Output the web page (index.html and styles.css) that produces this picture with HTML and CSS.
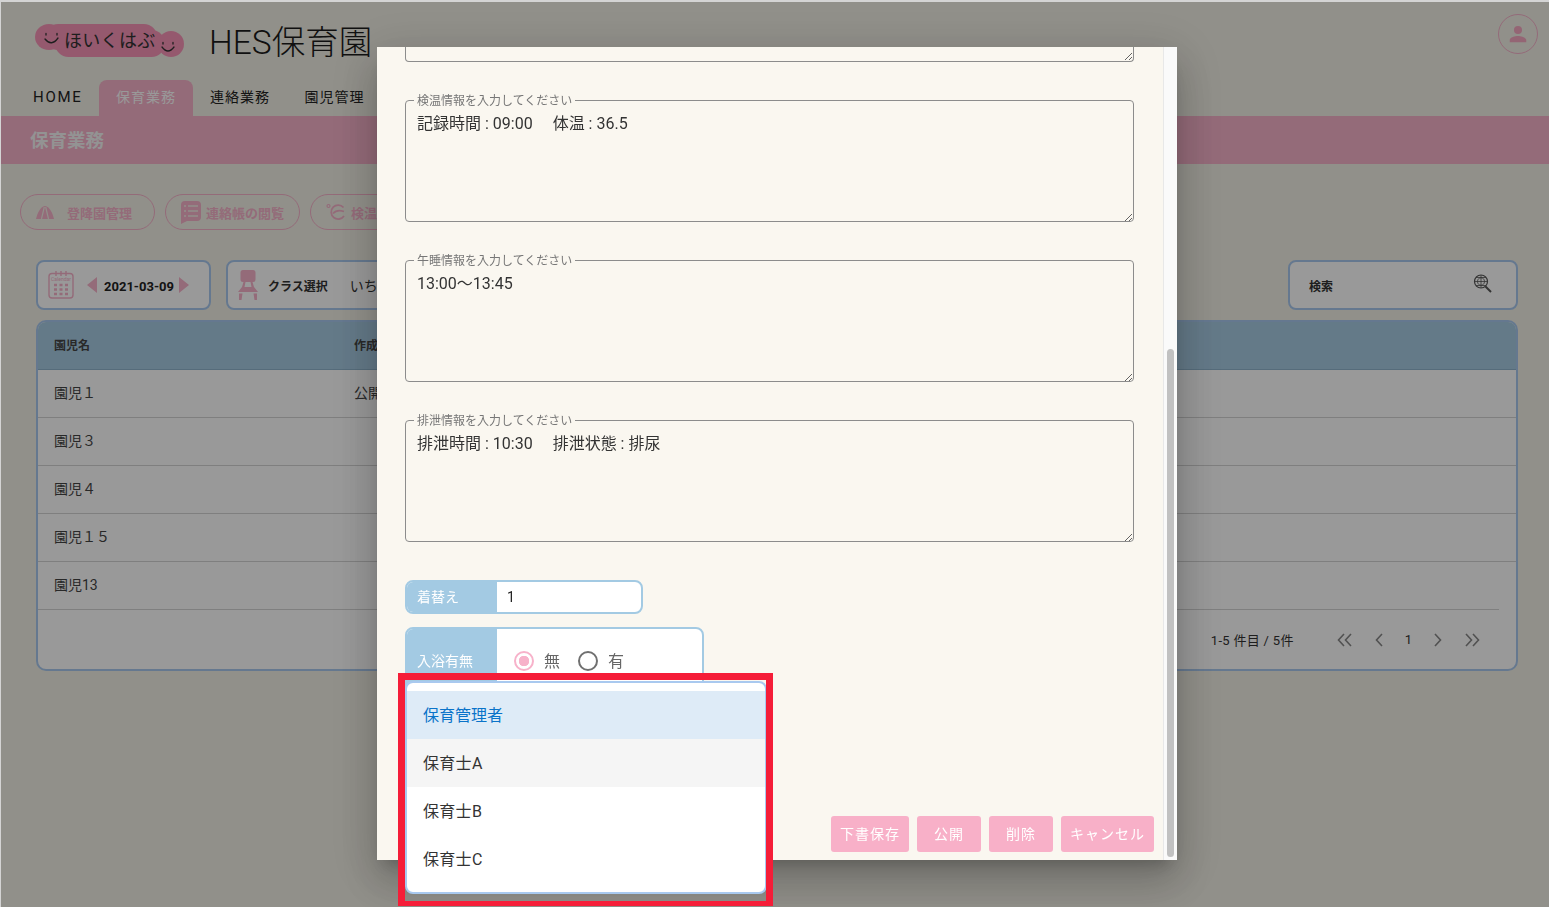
FILE: index.html
```html
<!DOCTYPE html>
<html lang="ja">
<head>
    <meta name="viewport" content="width=device-width, initial-scale=1.0">
    <title>HES保育園</title>
    <link rel="stylesheet" href="styles.css">
</head>
<body>
    <div class="page">
        <header class="topbar">
            <div class="brand">
                <svg class="logo" width="150" height="34" viewBox="0 0 150 34">
                    <ellipse class="logo-blob" cx="14" cy="13" rx="14" ry="13"/>
                    <rect class="logo-blob" x="10" y="0" width="112" height="26" rx="13"/>
                    <rect class="logo-blob" x="20" y="6" width="110" height="27" rx="13.500"/>
                    <ellipse class="logo-blob" cx="136" cy="20" rx="13" ry="13"/>
                    <path class="logo-face" d="M11 9.500v1.500M22 9.500v1.500M10 15Q16.500 23 23 14"/>
                    <path class="logo-face" d="M128 18.500v1.500M138 18.500v1.500M127 23Q133 31 139 23"/>
                    <text class="logo-text" x="29" y="23">ほいくはぶ</text>
                </svg>
                <h1 class="site-name">HES保育園</h1>
            </div>
            <div class="user-btn">
                <svg width="22" height="22" viewBox="0 0 24 24"><path d="M12 12a4.400 4.400 0 1 0 0-8.800 4.400 4.400 0 0 0 0 8.800zm0 2.200c-3 0-9 1.500-9 4.400V21h18v-2.400c0-2.900-6-4.400-9-4.400z"/></svg>
            </div>
        </header>

        <nav class="tabs">
            <a class="tab tab-home">HOME</a>
            <a class="tab active">保育業務</a>
            <a class="tab">連絡業務</a>
            <a class="tab">園児管理</a>
        </nav>
        <div class="band">保育業務</div>

        <div class="shortcuts">
            <a class="pill">
                <svg class="pill-tent" width="18" height="13" viewBox="0 0 18 13"><path d="M9 0C4 1 1.500 7 0 13H18C16.500 7 14 1 9 0Z" fill="currentColor"/><path d="M8.300 1L5.500 13M9.700 1L12.500 13" fill="none" stroke="#f2f0e6" stroke-width="1.200"/></svg>
                <span>登降園管理</span>
            </a>
            <a class="pill">
                <svg width="20" height="23" viewBox="0 0 20 23"><path d="M4 0h12a4 4 0 0 1 4 4v12a4 4 0 0 1-4 4H6l-6 3V4a4 4 0 0 1 4-4z" fill="currentColor"/><path d="M3 5h2M3 10h2M3 15h2M7 5h10M7 10h10M7 15h10" stroke="#f2f0e6" stroke-width="1.400"/></svg>
                <span>連絡帳の閲覧</span>
            </a>
            <a class="pill">
                <svg width="20" height="18" viewBox="0 0 20 18" fill="none" stroke="currentColor"><circle cx="2.500" cy="3" r="1.500" stroke-width="1.200"/><path d="M17.500 4.500A7 7 0 1 0 18 13" stroke-width="1.800"/><path d="M7 10.500C10 7 14 7 18 8.500" stroke-width="1.800"/></svg>
                <span>検温情報</span>
            </a>
        </div>

        <div class="tools">
            <div class="tool tool-date">
                <svg width="26" height="28" viewBox="0 0 26 28" fill="none" stroke="currentColor">
                    <rect x="1" y="2.500" width="24" height="24.500" rx="3" stroke-width="1.400"/>
                    <path d="M8 0v5M13 0v5M18 0v5" stroke-width="1.400"/>
                    <text class="cal-text" x="13" y="10">Calendar</text>
                    <path d="M6 14h3M11.500 14h3M17 14h3M6 18.500h3M11.500 18.500h3M17 18.500h3M6 23h3M11.500 23h3M17 23h3" stroke-width="2.600"/>
                </svg>
                <span class="arrow arrow-left"></span>
                <span class="date-text">2021-03-09</span>
                <span class="arrow arrow-right"></span>
            </div>
            <div class="tool tool-class">
                <svg width="20" height="30" viewBox="0 0 20 30"><path d="M5 0h10a2.500 2.500 0 0 1 2.500 2.500v7a2.500 2.500 0 0 1-2.500 2.500h-.5l1.500 5 4 5H0l4-5 1.500-5H5a2.500 2.500 0 0 1-2.500-2.500v-7A2.500 2.500 0 0 1 5 0z M7.500 12l-1 5h7l-1-5z M1 23.500h3.500l-1 6.500H1z M15.500 23.500H19V30h-2.500z" fill="currentColor" fill-rule="evenodd"/></svg>
                <span class="tool-label">クラス選択</span>
                <span class="tool-value">いちご組</span>
            </div>
            <div class="tool tool-search">
                <span class="tool-label">検索</span>
                <svg width="20" height="20" viewBox="0 0 20 20" fill="none" stroke="#555"><circle cx="8" cy="7.500" r="6.500" stroke-width="1.200"/><path d="M1.500 7.500h13M8 1v13M3 3.500h10M3 11.500h10M4.500 7.500c0-5 7-5 7 0s-7 5-7 0" stroke-width=".8"/><path d="M12.500 12.500L18 18" stroke-width="2"/></svg>
            </div>
        </div>

        <section class="list-card">
            <table class="kids">
                <thead>
                    <tr><th class="col-name">園児名</th><th>作成状況</th></tr>
                </thead>
                <tbody>
                    <tr><td>園児１</td><td>公開</td></tr>
                    <tr><td>園児３</td><td></td></tr>
                    <tr><td>園児４</td><td></td></tr>
                    <tr><td>園児１５</td><td></td></tr>
                    <tr><td>園児13</td><td></td></tr>
                </tbody>
            </table>
            <div class="pager">
                <span class="pager-count">1-5 件目 / 5件</span>
                <div class="pager-btns">
                    <svg width="16" height="14" viewBox="0 0 16 14"><path d="M7 1L1.500 7 7 13M14 1L8.500 7 14 13"/></svg>
                    <svg width="10" height="14" viewBox="0 0 10 14"><path d="M8 1L2.500 7 8 13"/></svg>
                    <span class="pager-num">1</span>
                    <svg width="10" height="14" viewBox="0 0 10 14"><path d="M2 1L7.500 7 2 13"/></svg>
                    <svg width="16" height="14" viewBox="0 0 16 14"><path d="M2 1L7.500 7 2 13M9 1L14.500 7 9 13"/></svg>
                </div>
            </div>
        </section>
    </div>

    <div class="overlay"></div>

    <div class="dialog">
        <div class="dialog-body">
            <div class="field field-cut">
                <textarea class="field-input" readonly></textarea>
            </div>
            <fieldset class="field">
                <legend>検温情報を入力してください</legend>
                <textarea class="field-input" readonly>記録時間 : 09:00　 体温 : 36.5</textarea>
            </fieldset>
            <fieldset class="field">
                <legend>午睡情報を入力してください</legend>
                <textarea class="field-input" readonly>13:00〜13:45</textarea>
            </fieldset>
            <fieldset class="field">
                <legend>排泄情報を入力してください</legend>
                <textarea class="field-input" readonly>排泄時間 : 10:30　 排泄状態 : 排尿</textarea>
            </fieldset>

            <div class="form-row row-change">
                <span class="form-label">着替え</span>
                <span class="form-value">1</span>
            </div>
            <div class="form-row row-bath">
                <span class="form-label">入浴有無</span>
                <div class="radios">
                    <input type="radio" name="bath" checked>
                    <span class="radio-text">無</span>
                    <input type="radio" name="bath">
                    <span class="radio-text">有</span>
                </div>
            </div>

            <div class="dialog-actions">
                <button class="btn btn-draft">下書保存</button>
                <button class="btn btn-short">公開</button>
                <button class="btn btn-short">削除</button>
                <button class="btn btn-cancel">キャンセル</button>
            </div>
        </div>
        <div class="scrollbar"><div class="scroll-thumb"></div></div>
    </div>

    <ul class="menu">
        <li class="menu-item selected">保育管理者</li>
        <li class="menu-item hover">保育士A</li>
        <li class="menu-item">保育士B</li>
        <li class="menu-item">保育士C</li>
    </ul>
    <div class="highlight"></div>
</body>
</html>
```

FILE: styles.css
```css
*{
    margin: 0;
    padding: 0;
    box-sizing: border-box;
}
html, body{
    height: 100%;
    overflow: hidden;
}
body{
    background: #d4d4d4;
    font-family: "Roboto", "Noto Sans CJK JP", sans-serif;
    color: #333;
}
.page{
    height: 905px;
    margin: 2px 0 0 1px;
    background: #f2f0e6;
}
.topbar{
    height: 78px;
    display: flex;
    justify-content: space-between;
    padding: 22px 11px 0 34px;
}
.brand{
    display: flex;
    align-items: flex-start;
}
.logo{
    display: block;
}
.logo-blob{
    fill: #f895b8;
}
.logo-face{
    fill: none;
    stroke: #333;
    stroke-width: 1.300;
    stroke-linecap: round;
}
.logo-text{
    font-size: 18px;
    letter-spacing: .3px;
    fill: #333;
}
.site-name{
    font-size: 33.500px;
    font-weight: 300;
    line-height: 38px;
    margin-left: 24px;
    color: #1c1c1c;
}
.user-btn{
    width: 40px;
    height: 40px;
    margin-top: -10px;
    border: 1px solid #f7b2ca;
    border-radius: 50%;
    display: flex;
    align-items: center;
    justify-content: center;
}
.user-btn svg{
    fill: #f7a8c2;
}
.tabs{
    height: 36px;
    display: flex;
    padding-left: 32px;
}
.tab{
    height: 36px;
    padding: 0 17.500px 0 17px;
    line-height: 35px;
    font-size: 14px;
    letter-spacing: 1px;
    color: #222;
}
.tab-home{
    width: 66px;
    padding: 0;
    font-size: 15px;
    letter-spacing: 1.700px;
}
.tab.active{
    width: 94px;
    padding: 0 17px;
    background: #f7b2ca;
    border-radius: 8px 8px 0 0;
    color: #fff;
}
.band{
    height: 48px;
    padding-left: 29px;
    background: #f7b2ca;
    color: #f5f5f5;
    font-size: 18.500px;
    font-weight: 700;
    line-height: 50px;
}
.shortcuts{
    display: flex;
    gap: 10px;
    padding: 30px 0 0 19px;
}
.pill{
    width: 135px;
    height: 36px;
    display: flex;
    align-items: center;
    padding-left: 15px;
    gap: 5px;
    border: 1px solid #f7b2ca;
    border-radius: 18px;
    color: #f7b2ca;
    font-size: 13px;
    font-weight: 700;
}
.pill-tent{
    margin-right: 8px;
}
.tools{
    display: flex;
    gap: 15px;
    padding: 30px 0 0 35px;
}
.tool{
    height: 50px;
    display: flex;
    align-items: center;
    background: #fff;
    border: 2px solid #a9c9ef;
    border-radius: 8px;
}
.tool-date{
    width: 175px;
    padding-left: 10px;
    color: #f7b2ca;
}
.cal-text{
    font-size: 5px;
    text-anchor: middle;
    fill: currentColor;
    stroke: none;
}
.arrow{
    width: 0;
    height: 0;
    border-top: 8px solid transparent;
    border-bottom: 8px solid transparent;
}
.arrow-left{
    margin-left: 13px;
    border-right: 10px solid #f7b2ca;
}
.arrow-right{
    border-left: 10px solid #f7b2ca;
}
.date-text{
    width: 82px;
    margin-top: 2px;
    padding-left: 2px;
    text-align: center;
    color: #222;
    font-size: 13px;
    font-weight: 700;
}
.tool-class{
    width: 300px;
    padding-left: 10px;
    color: #f7b2ca;
}
.tool-label{
    font-size: 12px;
    font-weight: 700;
    color: #333;
}
.tool-class .tool-label{
    margin-left: 10px;
}
.tool-value{
    margin-left: 22px;
    font-size: 14px;
    color: #333;
}
.tool-search{
    width: 230px;
    margin-left: auto;
    margin-right: 31px;
    padding: 0 23px 0 19px;
    justify-content: space-between;
}
.tool-search .tool-label{
    margin-top: 1px;
}
.tool-search svg{
    margin-top: -3px;
}
.list-card{
    width: 1482px;
    height: 351px;
    margin: 10px 0 0 35px;
    background: #fff;
    border: 2px solid #a9c9ef;
    border-radius: 10px;
    overflow: hidden;
}
.kids{
    width: 100%;
    border-collapse: collapse;
    font-size: 14px;
}
.kids th{
    height: 47px;
    padding: 0 0 2px 16px;
    background: #a7cbe3;
    border-bottom: 1px solid #8fb4cd;
    font-size: 12px;
    font-weight: 700;
    text-align: left;
    color: #444;
}
.kids .col-name{
    width: 300px;
}
.kids td{
    height: 48px;
    padding: 0 0 3px 16px;
    border-bottom: 1px solid #d4d4d4;
    color: #444;
}
.kids tr:last-child td{
    border-bottom: 0;
}
.pager{
    height: 60px;
    margin-right: 17px;
    padding-right: 19px;
    display: flex;
    justify-content: flex-end;
    align-items: center;
    gap: 43px;
    border-top: 1px solid #d4d4d4;
    font-size: 13px;
    color: #333;
}
.pager-count{
    letter-spacing: .3px;
}
.pager-btns{
    display: flex;
    align-items: center;
    gap: 21px;
}
.pager-btns svg{
    fill: none;
    stroke: #888;
    stroke-width: 1.600;
}

.overlay{
    position: fixed;
    top: 2px;
    left: 1px;
    right: 0;
    bottom: 0;
    background: rgba(0, 0, 0, .4);
}
.dialog{
    position: fixed;
    top: 47px;
    left: 377px;
    width: 800px;
    height: 813px;
    display: flex;
    background: #faf7f0;
    box-shadow: 0 11px 15px -7px rgba(0, 0, 0, .2), 0 24px 38px 3px rgba(0, 0, 0, .14), 0 9px 46px 8px rgba(0, 0, 0, .12);
}
.dialog-body{
    flex: 1;
    display: flex;
    flex-direction: column;
    padding: 0 9px 8px 28px;
}
.field{
    width: 729px;
    height: 129px;
    margin-top: 31px;
    border: 1px solid #8c8c8c;
    border-radius: 4px;
}
.field legend{
    margin-left: 8px;
    padding: 1px 3px 0;
    font-size: 12px;
    line-height: 14px;
    color: #777;
}
.field-cut{
    height: 15px;
    margin-top: 0;
    border-top: 0;
    border-radius: 0 0 4px 4px;
}
.field-input{
    display: block;
    width: 100%;
    height: 114px;
    padding: 4px 11px 0;
    border: 0;
    border-radius: 4px;
    outline: 0;
    background: transparent;
    font-family: inherit;
    font-size: 16px;
    line-height: 24px;
    color: #333;
}
.field-cut .field-input{
    height: 14px;
    padding: 0;
}
.form-row{
    display: flex;
    margin-top: 13px;
    background: #fff;
    border: 2px solid #a3cae3;
    border-radius: 8px;
    overflow: hidden;
}
.form-label{
    width: 90px;
    flex-shrink: 0;
    padding-left: 10px;
    background: #a3cae3;
    color: #fff;
    font-size: 14px;
}
.row-change{
    width: 238px;
    height: 34px;
    margin-top: 38px;
    line-height: 30px;
}
.form-value{
    padding-left: 10px;
    font-size: 14px;
    color: #222;
}
.row-bath{
    width: 299px;
    height: 70px;
}
.row-bath .form-label{
    padding-top: 21px;
}
.radios{
    height: 34px;
    margin-top: 15px;
    padding-left: 17px;
    display: flex;
    align-items: center;
}
.radios input{
    appearance: none;
    width: 20px;
    height: 20px;
    border: 2px solid #707070;
    border-radius: 50%;
}
.radios input:checked{
    border-color: #f7b2ca;
    background: radial-gradient(circle, #f7b2ca 0 5px, transparent 5.500px);
}
.radio-text{
    margin: -3px 18px 0 10px;
    font-size: 16px;
    color: #666;
}
.dialog-actions{
    margin-top: auto;
    display: flex;
    justify-content: flex-end;
    gap: 8px;
}
.btn{
    height: 36px;
    padding-bottom: 3px;
    border: 0;
    border-radius: 3px;
    background: #f8b0c8;
    color: #fff;
    font-family: inherit;
    font-size: 14px;
    letter-spacing: 1px;
}
.btn-draft{
    width: 78px;
}
.btn-short{
    width: 64px;
}
.btn-cancel{
    width: 93px;
}
.scrollbar{
    width: 14px;
    padding: 302px 3px 3px;
    background: #fafafa;
    border-left: 1px solid #e8e8e8;
}
.scroll-thumb{
    height: 100%;
    background: #c1c1c1;
    border-radius: 4px;
}

.menu{
    position: fixed;
    top: 681px;
    left: 405px;
    width: 362px;
    height: 213px;
    padding: 8px 0;
    list-style: none;
    background: #fff;
    border: 2px solid #a9c9ef;
    border-radius: 8px;
}
.menu-item{
    height: 48px;
    padding-left: 16px;
    font-size: 16px;
    line-height: 50px;
    letter-spacing: .3px;
    color: #333;
}
.menu-item.selected{
    background: #deebf7;
    color: #0a73c9;
    letter-spacing: 0;
}
.menu-item.hover{
    background: #f5f5f5;
}
.highlight{
    position: fixed;
    top: 673px;
    left: 398px;
    width: 375px;
    height: 233px;
    border: solid #f51d38;
    border-width: 7px 7px 5px;
}
```
